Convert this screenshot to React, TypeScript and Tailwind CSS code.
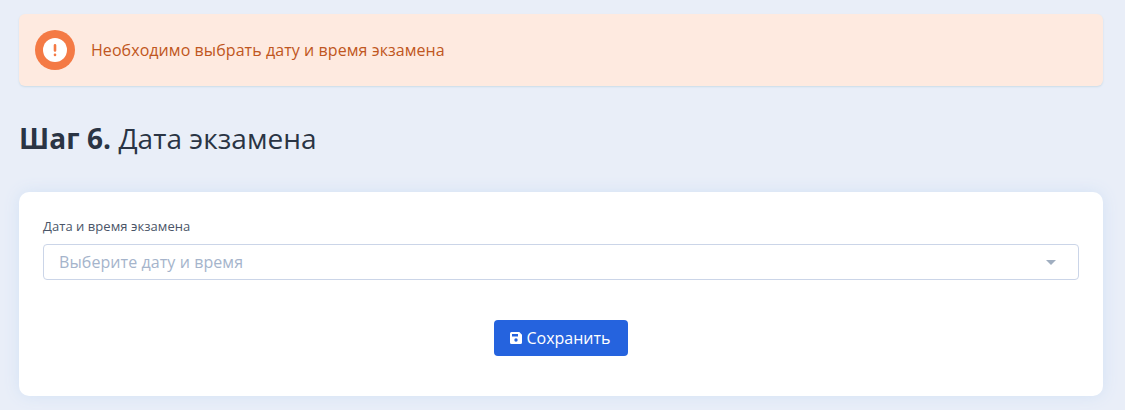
import React from "react";

export default function App() {
  return (
    <main className="flex h-[410px] w-full flex-col bg-[#e9eef8] pt-3.5 pr-[22px] pl-[19px] font-['Open_Sans',sans-serif]">
      <div className="flex h-[72px] shrink-0 items-center gap-4 rounded-md bg-[#feeae0] px-4 shadow-[0_1px_2px_#cbdce8]">
        <svg className="size-10" viewBox="0 0 40 40" aria-hidden="true">
          <circle cx="20" cy="20" r="20" fill="#f47a45" />
          <circle cx="20" cy="20" r="12" fill="#fff" />
          <path d="M20 15.200v5.200M20 24.800v.1" stroke="#f47a45" strokeWidth="2.600" strokeLinecap="round" />
        </svg>
        <p className="text-base tracking-[0.07px] text-[#c05621]">Необходимо выбрать дату и время экзамена</p>
      </div>
      <h1 className="mt-[34px] h-9 shrink-0 text-[28px] leading-9 tracking-[0.05px] text-[#2a3444]">
        <b className="font-bold">Шаг 6.</b> Дата экзамена
      </h1>
      <section className="mt-9 flex h-[204px] shrink-0 flex-col rounded-[10px] bg-white px-6 pt-6 shadow-[0_0_16px_#d3e2f5]">
        <label className="text-[13px] leading-5 tracking-[0.05px] text-[#4a5568]">Дата и время экзамена</label>
        <button className="mt-2 flex h-9 items-center justify-between rounded border border-[#cbd5e8] pr-[22px] pl-[15px] text-base tracking-[0.08px] text-[#a5b4cb]">
          Выберите дату и время
          <svg className="h-[5px] w-[10px]" viewBox="0 0 10 5" fill="#a0aec0" aria-hidden="true">
            <path d="M0 0h10L5 5z" />
          </svg>
        </button>
        <button className="mt-10 flex h-9 w-[134px] items-center justify-center gap-1 self-center rounded bg-[#2563de] pr-px text-base text-white">
          <svg className="size-3" viewBox="0 0 12 12" aria-hidden="true">
            <path fillRule="evenodd" fill="currentColor" d="M1.5 0h7.8L12 2.7v7.8a1.5 1.5 0 0 1-1.5 1.5h-9A1.5 1.5 0 0 1 0 10.500v-9A1.500 1.500 0 0 1 1.500 0ZM2 2v2.500h6V2ZM6 6.300a1.700 1.700 0 1 0 0 3.400a1.700 1.700 0 0 0 0-3.400Z" />
          </svg>
          Сохранить
        </button>
      </section>
    </main>
  );
}
